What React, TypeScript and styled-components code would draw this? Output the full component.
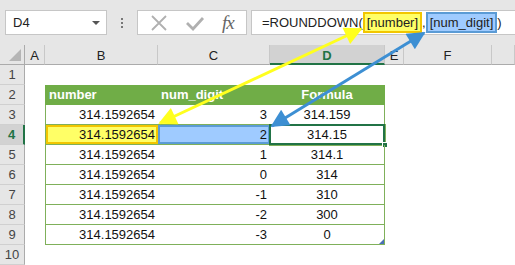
import React from 'react'
import styled, { createGlobalStyle, css } from 'styled-components'

const GlobalStyle = createGlobalStyle`
  html, body {
    margin: 0;
    padding: 0;
    background: #ffffff;
    overflow: hidden;
  }
  body {
    font-family: 'Liberation Sans', Arial, sans-serif;
  }
`

const Page = styled.div`
  position: relative;
  width: 515px;
  height: 265px;
  overflow: hidden;
  background: #ffffff;
`

const Toolbar = styled.div`
  height: 45px;
  background: #e6e6e6;
  display: flex;
  align-items: flex-start;
  padding-top: 10px;
  box-sizing: border-box;
`

const NameBox = styled.div`
  margin-left: 5px;
  width: 102px;
  height: 25px;
  box-sizing: border-box;
  background: #fff;
  border: 1px solid #c6c6c6;
  display: flex;
  align-items: center;
  justify-content: space-between;
  padding: 0 6px 0 7px;
  font-size: 13px;
  color: #222;
`

const DropArrow = styled.span`
  width: 0;
  height: 0;
  border-left: 4px solid transparent;
  border-right: 4px solid transparent;
  border-top: 4px solid #555;
`

const Dots = styled.div`
  width: 30px;
  height: 25px;
  display: flex;
  flex-direction: column;
  align-items: center;
  justify-content: center;
  gap: 2px;

  span {
    width: 2px;
    height: 2px;
    background: #777;
  }
`

const FxBox = styled.div`
  width: 110px;
  height: 25px;
  box-sizing: border-box;
  background: #fff;
  border: 1px solid #c6c6c6;
  display: flex;
  align-items: center;
  justify-content: space-around;
  padding: 0 4px;
`

const FxText = styled.span`
  font-family: 'Liberation Serif', 'Times New Roman', serif;
  font-style: italic;
  font-size: 19px;
  color: #666;
  letter-spacing: -1px;
`

const FormulaInput = styled.div`
  margin-left: 4px;
  flex: 1;
  height: 25px;
  box-sizing: border-box;
  background: #fff;
  border-left: 1px solid #c6c6c6;
  border-top: 1px solid #c6c6c6;
  border-bottom: 1px solid #c6c6c6;
  display: flex;
  align-items: center;
  padding-left: 10px;
  font-size: 13px;
  color: #222;
  white-space: nowrap;
`

const Ref = styled.span<{ $tone: 'yellow' | 'blue' }>`
  padding: 1px 2px;
  border: 2px solid;
  ${(p) =>
    p.$tone === 'yellow'
      ? css`
          background: #ffff66;
          border-color: #f2c600;
        `
      : css`
          background: #9fcbff;
          border-color: #5b9bd5;
        `}
`

const Sheet = styled.div`
  display: grid;
  grid-template-columns: 25px 20px 113px 112px 115px 19px 88px 1fr;
  grid-auto-rows: 20px;
  font-size: 13px;
  color: #111;
`

const Corner = styled.div`
  background: #e6e6e6;
  border-right: 1px solid #ababab;
  border-bottom: 1px solid #ababab;
  box-sizing: border-box;
  display: flex;
  align-items: flex-end;
  justify-content: flex-end;
  padding: 0 3px 3px 0;
`

const ColHead = styled.div<{ $active?: boolean }>`
  background: ${(p) => (p.$active ? '#d2d2d2' : '#e6e6e6')};
  border-right: 1px solid #c8c8c8;
  border-bottom: ${(p) => (p.$active ? '2px solid #217346' : '1px solid #ababab')};
  box-sizing: border-box;
  display: flex;
  align-items: center;
  justify-content: center;
  color: ${(p) => (p.$active ? '#217346' : '#222')};
  font-weight: ${(p) => (p.$active ? 'bold' : 'normal')};
  padding-top: 2px;
`

const RowHead = styled.div<{ $active?: boolean }>`
  background: ${(p) => (p.$active ? '#d2d2d2' : '#e6e6e6')};
  border-right: ${(p) => (p.$active ? '2px solid #217346' : '1px solid #ababab')};
  border-bottom: 1px solid #d0d0d0;
  box-sizing: border-box;
  display: flex;
  align-items: center;
  justify-content: center;
  color: ${(p) => (p.$active ? '#217346' : '#444')};
  font-weight: ${(p) => (p.$active ? 'bold' : 'normal')};
`

const Blank = styled.div``

const tableGreen = '#7fb05a'

const Cell = styled.div<{
  $align?: 'left' | 'right' | 'center'
  $head?: boolean
  $first?: boolean
  $last?: boolean
  $tone?: 'yellow' | 'blue'
  $selected?: boolean
}>`
  position: relative;
  box-sizing: border-box;
  display: flex;
  align-items: center;
  padding: 0 3px;
  white-space: nowrap;
  justify-content: ${(p) =>
    p.$align === 'right' ? 'flex-end' : p.$align === 'center' ? 'center' : 'flex-start'};
  border-left: ${(p) => (p.$first ? `1px solid ${tableGreen}` : 'none')};
  border-right: ${(p) => (p.$last ? `1px solid ${tableGreen}` : 'none')};
  border-bottom: 1px solid ${tableGreen};
  ${(p) =>
    p.$head &&
    css`
      background: #70ad47;
      color: #fff;
      font-weight: bold;
      border-color: #70ad47;
    `}
  ${(p) =>
    p.$tone === 'yellow' &&
    css`
      background: #ffff66;
      box-shadow: inset 0 0 0 2px #f2c600;
    `}
  ${(p) =>
    p.$tone === 'blue' &&
    css`
      background: #9fcbff;
      box-shadow: inset 0 0 0 2px #5b9bd5;
    `}
  ${(p) =>
    p.$selected &&
    css`
      box-shadow: inset 0 0 0 2px #217346;
      margin: -1px -1px 0 -1px;
      height: 22px;
    `}
`

const FillHandle = styled.span`
  position: absolute;
  right: -3px;
  bottom: -3px;
  width: 6px;
  height: 6px;
  background: #217346;
  border: 1px solid #fff;
  box-sizing: border-box;
`

const ResizeMark = styled.span`
  position: absolute;
  right: 0;
  bottom: 0;
  width: 0;
  height: 0;
  border-left: 5px solid transparent;
  border-bottom: 5px solid #4a6fb5;
`

const Overlay = styled.svg`
  position: absolute;
  left: 0;
  top: 0;
  pointer-events: none;
`

const rows = [
  { n: '314.1592654', d: '3', r: '314.159' },
  { n: '314.1592654', d: '2', r: '314.15' },
  { n: '314.1592654', d: '1', r: '314.1' },
  { n: '314.1592654', d: '0', r: '314' },
  { n: '314.1592654', d: '-1', r: '310' },
  { n: '314.1592654', d: '-2', r: '300' },
  { n: '314.1592654', d: '-3', r: '0' },
]

const cols = ['A', 'B', 'C', 'D', 'E', 'F', '']

const App = () => {
  return (
    <Page>
      <GlobalStyle />
      <Toolbar>
        <NameBox>
          D4
          <DropArrow />
        </NameBox>
        <Dots>
          <span />
          <span />
          <span />
        </Dots>
        <FxBox>
          <svg width="18" height="16" viewBox="0 0 18 16">
            <path d="M2 1 L16 15 M16 1 L2 15" stroke="#b0b0b0" strokeWidth="1.8" fill="none" />
          </svg>
          <svg width="20" height="16" viewBox="0 0 20 16">
            <path d="M2 8 L8 14 L18 3" stroke="#b0b0b0" strokeWidth="2.8" fill="none" />
          </svg>
          <FxText>fx</FxText>
        </FxBox>
        <FormulaInput>
          =ROUNDDOWN(<Ref $tone="yellow">[number]</Ref>,<Ref $tone="blue">[num_digit]</Ref>)
        </FormulaInput>
      </Toolbar>

      <Sheet>
        <Corner>
          <svg width="12" height="12" viewBox="0 0 12 12">
            <path d="M12 0 L12 12 L0 12 Z" fill="#b5b5b5" />
          </svg>
        </Corner>
        {cols.map((c, i) => (
          <ColHead key={i} $active={c === 'D'}>
            {c}
          </ColHead>
        ))}

        <RowHead>1</RowHead>
        {cols.map((_, i) => (
          <Blank key={i} />
        ))}

        <RowHead>2</RowHead>
        <Blank />
        <Cell $head $first>number</Cell>
        <Cell $head>num_digit</Cell>
        <Cell $head $last $align="center">
          Formula
        </Cell>
        <Blank />
        <Blank />
        <Blank />

        {rows.map((row, i) => {
          const current = i === 1
          const lastRow = i === rows.length - 1
          return (
            <React.Fragment key={i}>
              <RowHead $active={current}>{i + 3}</RowHead>
              <Blank />
              <Cell $first $align="right" $tone={current ? 'yellow' : undefined}>
                {row.n}
              </Cell>
              <Cell $align="right" $tone={current ? 'blue' : undefined}>
                {row.d}
              </Cell>
              <Cell $last $align="center" $selected={current}>
                {row.r}
                {current && <FillHandle />}
                {lastRow && <ResizeMark />}
              </Cell>
              <Blank />
              <Blank />
              <Blank />
            </React.Fragment>
          )
        })}

        <RowHead>10</RowHead>
        {cols.map((_, i) => (
          <Blank key={i} />
        ))}
      </Sheet>

      <Overlay width="515" height="265" viewBox="0 0 515 265">
        <defs>
          <marker
            id="headY"
            viewBox="0 0 10 10"
            refX="9"
            refY="5"
            markerWidth="8"
            markerHeight="6"
            orient="auto-start-reverse"
          >
            <path d="M0 0 L10 5 L0 10 Z" fill="#ffff1e" />
          </marker>
          <marker
            id="headB"
            viewBox="0 0 10 10"
            refX="9"
            refY="5"
            markerWidth="8"
            markerHeight="6"
            orient="auto-start-reverse"
          >
            <path d="M0 0 L10 5 L0 10 Z" fill="#3d8fd3" />
          </marker>
        </defs>
        <line
          x1="160"
          y1="123"
          x2="361"
          y2="29"
          stroke="#ffff1e"
          strokeWidth="3"
          markerStart="url(#headY)"
          markerEnd="url(#headY)"
        />
        <line
          x1="272"
          y1="126"
          x2="424"
          y2="33"
          stroke="#3d8fd3"
          strokeWidth="3"
          markerStart="url(#headB)"
          markerEnd="url(#headB)"
        />
      </Overlay>
    </Page>
  )
}

export default App
